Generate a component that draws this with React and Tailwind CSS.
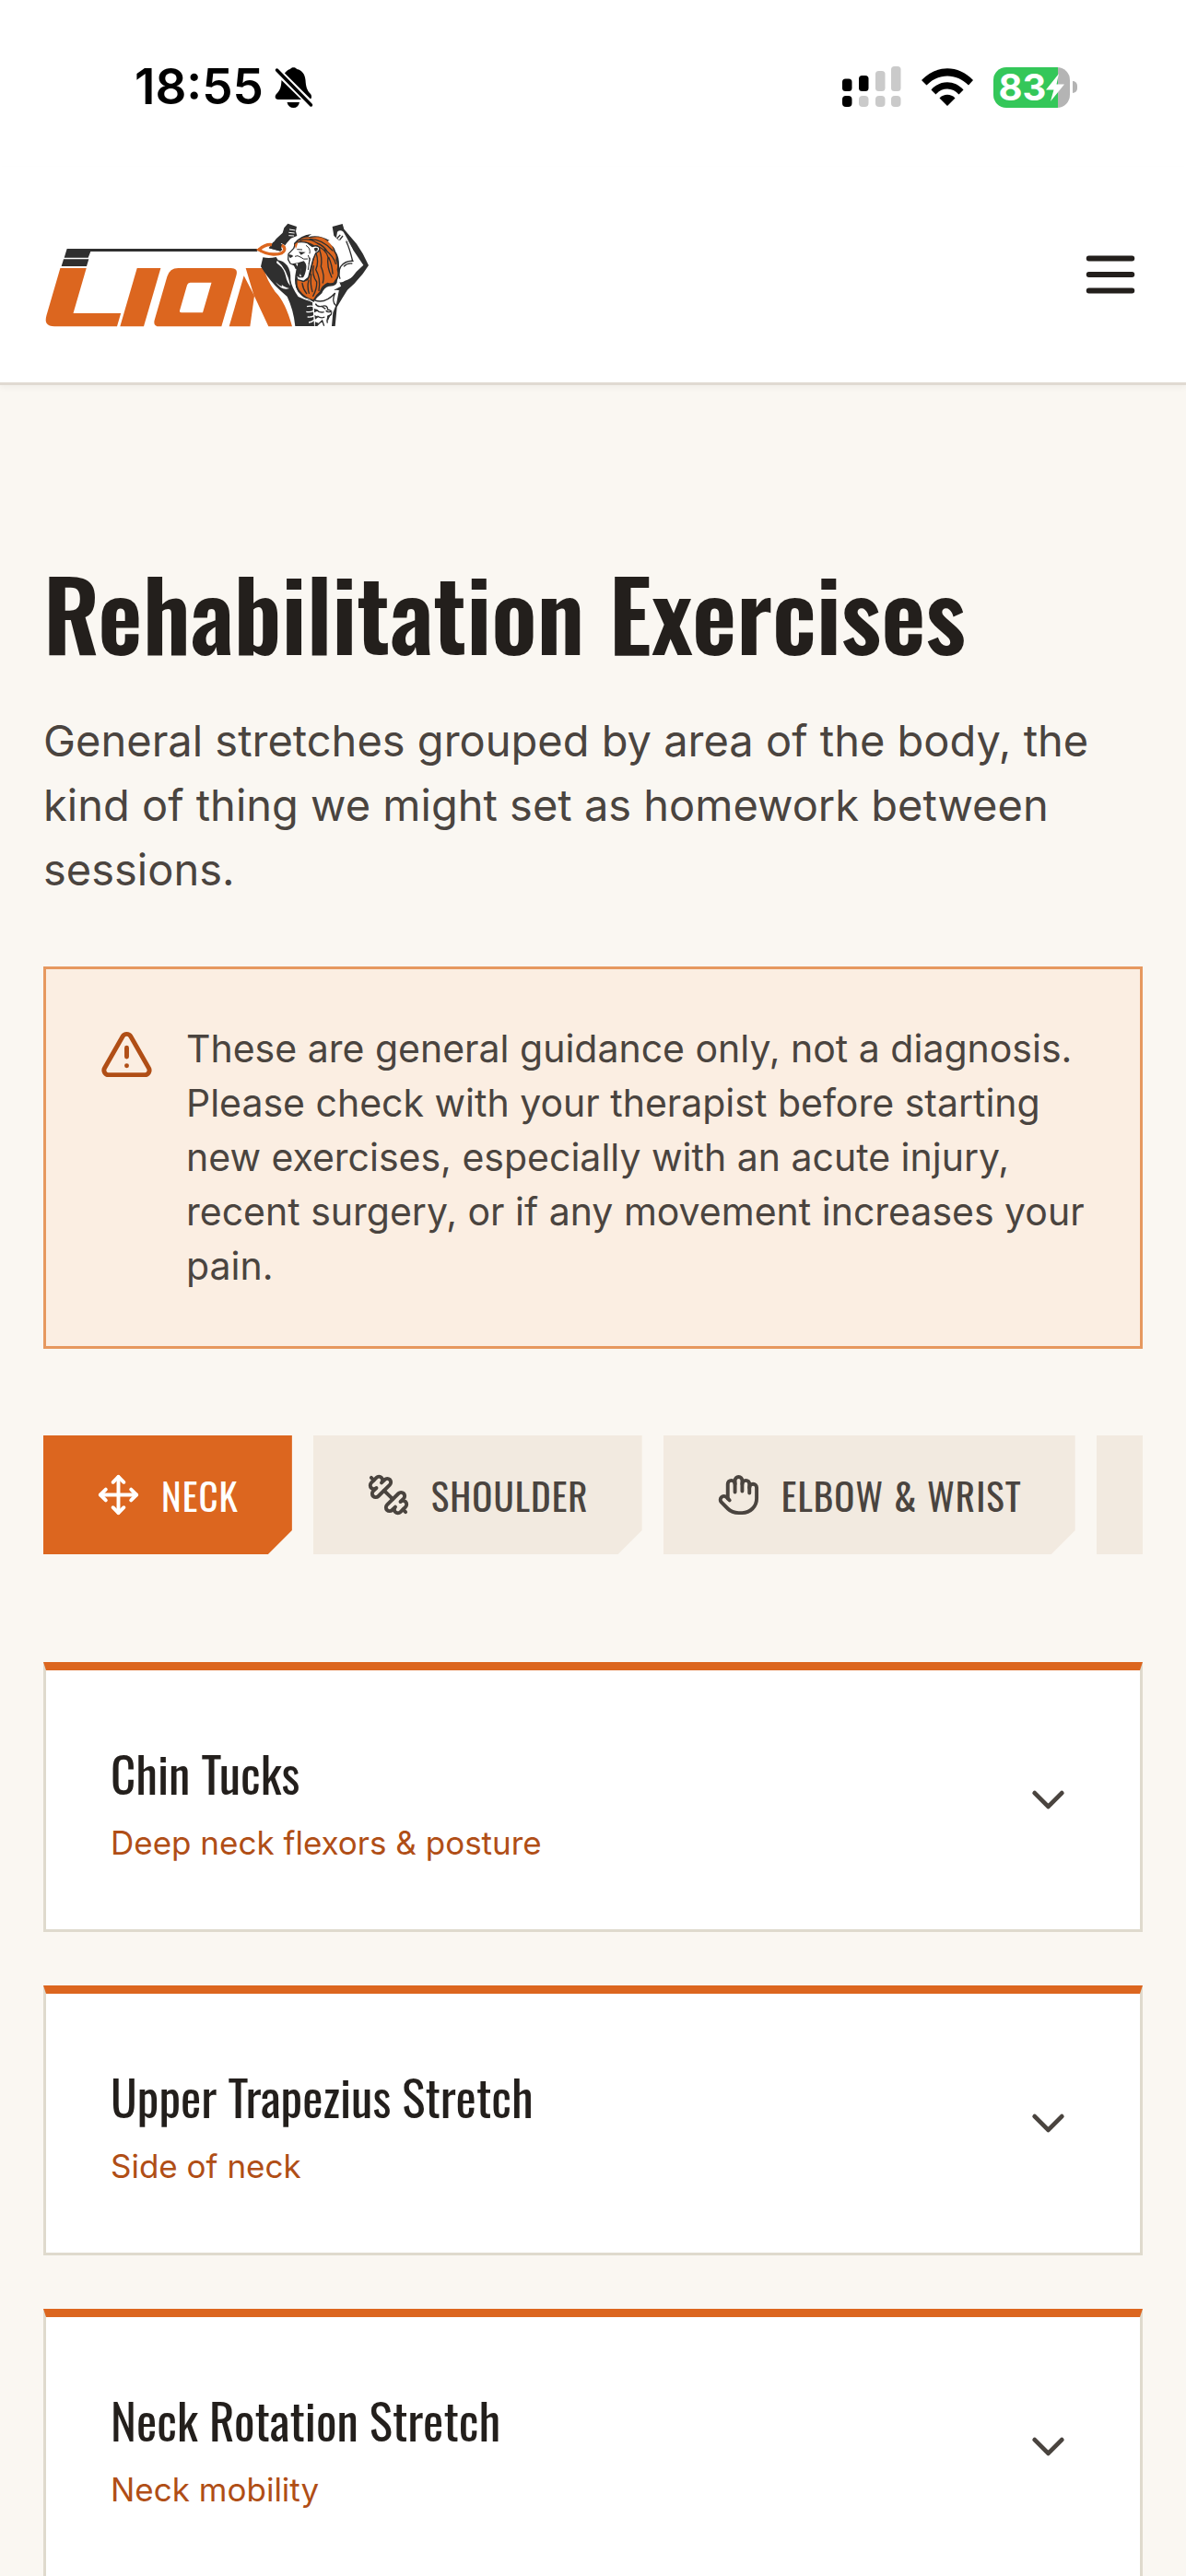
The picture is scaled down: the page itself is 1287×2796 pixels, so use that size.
import { TriangleAlert, Move, Hand, Footprints, ChevronDown } from "lucide-react";

function DumbbellDown({ className }) {
  return (
    <svg
      viewBox="0 0 24 24"
      className={className}
      fill="none"
      stroke="currentColor"
      strokeWidth="2"
      strokeLinecap="round"
      strokeLinejoin="round"
      aria-hidden="true"
    >
      <path d="M14.400 14.400 9.600 9.600" />
      <path d="M18.657 21.485a2 2 0 1 1-2.829-2.828l-1.767 1.768a2 2 0 1 1-2.829-2.829l6.364-6.364a2 2 0 1 1 2.829 2.829l-1.768 1.767a2 2 0 1 1 2.828 2.829z" />
      <path d="m21.500 21.500-1.400-1.400" />
      <path d="M3.900 3.900 2.500 2.500" />
      <path d="M6.404 12.768a2 2 0 1 1-2.829-2.829l1.768-1.767a2 2 0 1 1-2.828-2.829l2.828-2.828a2 2 0 1 1 2.829 2.828l1.767-1.768a2 2 0 1 1 2.829 2.829z" />
    </svg>
  );
}

const TABS = [
  { label: "Neck", icon: Move, active: true },
  { label: "Shoulder", icon: DumbbellDown },
  { label: "Elbow & Wrist", icon: Hand },
  { label: "Back", icon: Footprints },
];

const EXERCISES = [
  { title: "Chin Tucks", area: "Deep neck flexors & posture" },
  { title: "Upper Trapezius Stretch", area: "Side of neck" },
  { title: "Neck Rotation Stretch", area: "Neck mobility" },
];

function BellOff() {
  return (
    <svg viewBox="0 0 42 46" className="h-[46px] w-[42px]" aria-label="Silent mode">
      <path d="M10 9C12 5 15 3.500 17 3C18 .5 23 .5 24 3C30 4 33 9 33.500 15C34 22 35 26 39 30C41 33 40 36 37 36L36 36Z" />
      <path d="M7.500 15L29 36H4C0 36 0 32 2 30C6 26 7 23 7.500 15Z" />
      <path d="M13.500 39H27C26 43 24 45 20.500 45C17 45 14.500 43 13.500 39Z" />
      <path d="M2.500 4L40 41.500" stroke="#fff" strokeWidth="7" />
      <path d="M2.500 4L39.500 42" stroke="#000" strokeWidth="3.500" strokeLinecap="round" />
    </svg>
  );
}

function Signal() {
  return (
    <svg viewBox="0 0 64 46" className="h-[46px] w-16" aria-label="Signal">
      <g fill="#cacaca">
        <rect x="36" y="5" width="10.500" height="22" rx="3.500" />
        <rect x="53" y="0" width="10.500" height="27" rx="3.500" />
        <rect x="18" y="32" width="10.500" height="12" rx="4" />
        <rect x="36" y="32" width="10.500" height="12" rx="4" />
        <rect x="53" y="32" width="10.500" height="12" rx="4" />
      </g>
      <rect x="0" y="13.500" width="10.500" height="13.500" rx="3.500" />
      <rect x="18" y="10" width="10.500" height="17" rx="3.500" />
      <rect x="0" y="32" width="10.500" height="12" rx="4" />
    </svg>
  );
}

function Wifi() {
  return (
    <svg viewBox="0 0 56 42" className="h-[42px] w-14" aria-label="Wi-Fi">
      <path d="M28 41L19.500 32.500C24 27.500 32 27.500 36.500 32.500Z" />
      <path d="M10.500 23.500C20 12.500 36 12.500 45.500 23.500L40.500 28.500C34 20.500 22 20.500 15.500 28.500Z" />
      <path d="M0 13C16 -4 40 -4 56 13L51 18.500C38 5 18 5 5.500 18.500Z" />
    </svg>
  );
}

function Battery() {
  return (
    <div className="flex items-center gap-[3px]" aria-label="Battery 83 percent, charging">
      <div className="flex h-11 w-[83px] items-center justify-center rounded-[14px] bg-[linear-gradient(90deg,#34c759_84%,#b4b4b4_84%)]">
        <span className="text-[40px] leading-none font-bold text-white">83</span>
        <svg viewBox="0 0 20 30" className="h-[30px] w-5" fill="#fff">
          <path d="M14 0L0 17.500H8.500L5 30L20 11.500H11.500Z" />
        </svg>
      </div>
      <div className="h-[13px] w-[5px] rounded-r-full bg-[#b4b4b4]" />
    </div>
  );
}

function Logo() {
  return (
    <svg viewBox="50 60 1065 348" className="h-[116px] w-[355px]" role="img" aria-label="Lion">
      <g fill="#dc661f">
        {/* slanted bars of the word mark */}
        <g transform="translate(0 403) skewX(-16.200)">
          <path d="M50 -190H135V-43H290V0H86Q50 0 50 -36Z" />
          <rect x="300" y="-190" width="77" height="190" />
          <path fillRule="evenodd" d="M434 -190H606Q630 -190 630 -166V0H428Q406 0 406 -22V-162Q406 -190 434 -190ZM487 -143Q479 -143 479 -135V-53Q479 -45 487 -45H556V-143Z" />
        </g>
        <path d="M655 403L703 238L737 303L723 403Z" />
        <path d="M709 213H768Q776 250 805 290Q838 322 860 403H783L735 300Z" />
      </g>
      <g fill="#2f2f2f">
        <path d="M127 150H747V159H204L196 179H118Z" />
        <path d="M116 184H198L191 207H109Z" />
      </g>

      <g transform="translate(738 48)">
        {/* torso and right arm in white, under the dark shading */}
        <path d="M120 185L262 45L300 70L330 110L366 155L320 215L280 260L258 354H190L140 262Z" fill="#fff" />

        {/* left fist and forearm */}
        <path d="M108 20L137 30L134 45L138 60L118 68L104 84L86 110L47 100L70 70L91 50L96 34Z" fill="#2f2f2f" />
        <path d="M113 39L132 42M111 49L130 51M111 59L128 60" stroke="#fff" strokeWidth="3" fill="none" />

        {/* ring */}
        <path d="M14 105Q36 86 60 88M84 91Q99 96 97 106Q93 122 60 121Q34 120 14 105" fill="none" stroke="#fff" strokeWidth="15" />
        <path d="M46 100L84 110L90 88L60 80Z" fill="#2f2f2f" />
        <path d="M14 105Q36 86 56 89M88 91Q99 96 97 106Q93 121 60 120Q34 119 14 105" fill="none" stroke="#dc661f" strokeWidth="10" strokeLinejoin="round" />
        <path d="M4 105L22 96V114Z" fill="#dc661f" />

        {/* left upper arm, chest and abdomen in shadow */}
        <path d="M27 130Q48 134 70 129L76 139Q93 141 106 157Q118 173 117 204Q120 227 142 258Q162 268 188 276L194 354H132Q127 302 106 258Q83 238 67 222Q42 196 20 160Z" fill="#2f2f2f" />
        <path d="M74 141Q66 147 80 155Q95 166 101 190Q105 211 116 223Q106 168 74 141Z" fill="#fff" />
        <path d="M68 211Q89 240 113 231Q96 227 88 218Q95 234 68 211Z" fill="#fff" />
        <path d="M170 290Q185 286 196 292M168 307Q181 310 192 304M172 324Q184 326 194 320M176 342Q186 342 194 334" stroke="#fff" strokeWidth="4" fill="none" />

        {/* right arm */}
        <path d="M253 30L286 21L291 38L300 49L332 86L352 118L371 156L352 184L324 216L302 236L286 262L268 292L262 354H251L255 310L266 282L274 240L258 236Q305 216 331 177L354 155L322 108L301 76L292 68L276 76L258 60Z" fill="#2f2f2f" />
        <path d="M269 47Q279 39 289 47L301 68L319 103L320 146Q298 138 282 158Q270 178 281 202Q308 207 336 166L350 156L324 120L303 78L296 71L282 78L266 66Z" fill="#fff" />
        <path d="M268 68L279 57M277 73L287 60M298 77Q310 103 319 142M322 142Q297 139 280 160Q270 180 278 200M290 160Q302 147 318 150" stroke="#2f2f2f" strokeWidth="4" fill="none" />
        <path d="M294 206Q286 213 276 211L286 236Q314 210 331 183Q314 200 294 206Z" fill="#2f2f2f" />

        {/* chest and abdominal lines */}
        <path d="M202 267Q225 263 242 246Q260 232 276 238Q261 251 244 259Q224 272 202 267Z" fill="#fff" />
        <path d="M196 270Q230 282 262 246M262 246Q248 274 266 288M198 281Q204 293 220 289Q237 284 238 300Q253 303 249 316Q232 326 237 344M200 300Q211 312 226 308M204 321Q216 330 228 324M216 288L231 298M210 345L220 336L226 353M252 305Q239 312 232 303" fill="none" stroke="#2f2f2f" strokeWidth="4" />
        <path d="M194 296L208 303L194 310ZM195 318L208 324L197 332ZM197 340L212 346L204 354H196ZM236 320L248 315L238 338Z" fill="#2f2f2f" />

        {/* mane */}
        <path d="M128 84Q148 58 186 54Q176 59 174 64Q208 54 244 75Q238 76 236 80Q261 95 263 110Q276 128 275 158Q282 178 269 204Q270 225 242 224Q225 229 219 247Q204 258 192 276Q164 270 140 241Q128 222 132 190L140 142L128 105Z" fill="#2f2f2f" />
        <path d="M140 78Q161 61 183 66Q220 57 239 79Q255 91 258 112Q268 126 264 139Q272 156 268 170Q275 190 260 206Q258 217 237 212Q219 220 211 242Q200 250 191 268Q164 261 146 237Q136 222 139 200L158 211L174 204L184 180L191 143L200 112L193 90Q172 76 140 78Z" fill="#dc661f" />
        <path d="M148 75Q178 65 204 84Q224 91 237 112M180 70Q221 71 254 108M203 93Q233 105 239 130Q234 159 251 195M211 106Q221 133 216 160Q229 190 222 213M200 116Q210 145 199 170Q216 199 209 238M192 158Q185 186 202 210Q203 233 190 256M184 185Q180 217 188 242M176 205Q170 225 177 247M155 214Q157 232 169 248M241 130Q252 154 254 183M228 104Q257 126 264 151" fill="none" stroke="#2f2f2f" strokeWidth="4" strokeLinecap="round" />
        <path d="M129 213Q134 247 160 263Q178 265 191 277" fill="none" stroke="#fff" strokeWidth="3" />

        {/* face */}
        <path d="M133 84Q149 76 172 83L188 95Q202 88 211 98Q214 110 199 116L191 134L184 160L175 196L160 208L140 203L136 192L150 180L148 164L134 166L130 156L116 150L109 137L110 119L127 101Z" fill="#fff" stroke="#2f2f2f" strokeWidth="4" strokeLinejoin="round" />
        <path d="M130 88L142 79L134 103Z" fill="#dc661f" />
        <path d="M109 122Q119 119 126 126L116 133ZM143 112L166 113L151 122ZM193 101Q201 95 206 101Q206 109 197 111ZM122 151L140 148L160 142Q170 151 168 166Q165 186 158 196L144 196L139 191L151 181L149 165L136 166Z" fill="#2f2f2f" />
        <path d="M131 127Q140 122 149 129Q159 139 173 135M167 91Q183 100 179 118M174 123Q184 139 176 151M180 131L174 171M138 104L155 105" fill="none" stroke="#2f2f2f" strokeWidth="3" />
        <path d="M134 151L141 149L139 160ZM146 192L148 184L153 191Z" fill="#fff" />
      </g>
    </svg>
  );
}

function ExerciseCard({ title, area }) {
  return (
    <button
      type="button"
      className="flex w-full items-center justify-between border-3 border-t-9 border-[#dfdacd] border-t-[#dc661f] bg-white p-[70px] text-left"
    >
      <span className="flex flex-col gap-3">
        <span className="font-[Oswald,sans-serif] text-[53px] leading-[82px] text-[#231f1c]">{title}</span>
        <span className="text-[35px] leading-[47px] text-[#b04e16]">{area}</span>
      </span>
      <ChevronDown className="size-[59px] shrink-0 text-[#4a443f]" />
    </button>
  );
}

export default function App() {
  return (
    <div className="h-screen overflow-hidden bg-[#faf7f2] font-[Inter,sans-serif] text-[#4a443f]">
      <div className="flex h-[181px] items-center justify-between bg-white pr-[118px] pl-[146px] text-black">
        <div className="flex items-center gap-3 pt-2">
          <span className="text-[53px] leading-none font-semibold">18:55</span>
          <BellOff />
        </div>
        <div className="flex items-center gap-[22px] pt-2">
          <Signal />
          <Wifi />
          <Battery />
        </div>
      </div>

      <header className="flex h-[237px] items-center justify-between border-b-3 border-[#e0dad2] bg-white px-[47px] shadow-[0_3px_6px_rgba(0,0,0,0.04)]">
        <a href="#home" aria-label="Home">
          <Logo />
        </a>
        <button type="button" aria-label="Open menu" className="text-[#231f1c]">
          <svg viewBox="0 0 24 24" className="size-[70px]" stroke="currentColor" strokeWidth="2" strokeLinecap="round">
            <path d="M4 6H20M4 12H20M4 18H20" />
          </svg>
        </button>
      </header>

      <main className="px-[47px] pt-[187px]">
        <h1 className="font-[Oswald,sans-serif] text-[105px] leading-[117px] font-semibold text-[#231f1c]">
          Rehabilitation Exercises
        </h1>
        <p className="mt-[47px] text-[47px] leading-[70px]">
          General stretches grouped by area of the body, the kind of thing we might set as homework between sessions.
        </p>

        <div className="mt-[70px] flex gap-[35px] border-3 border-[#e6985f] bg-[#fbeee2] px-[58px] py-[57px]" role="note">
          <TriangleAlert className="mt-1.5 size-[59px] shrink-0 text-[#b04e16]" />
          <p className="text-[41px] leading-[59px]">
            These are general guidance only, not a diagnosis. Please check with your therapist before starting new
            exercises, especially with an acute injury, recent surgery, or if any movement increases your pain.
          </p>
        </div>

        <nav className="mt-[94px] flex gap-[23px] overflow-hidden" aria-label="Body areas">
          {TABS.map(({ label, icon: Icon, active }) => (
            <button
              key={label}
              type="button"
              className={
                "flex h-[129px] shrink-0 items-center gap-[23px] px-[58px] font-[Oswald,sans-serif] text-[41px] tracking-wide uppercase [clip-path:polygon(0_0,100%_0,100%_calc(100%-26px),calc(100%-26px)_100%,0_100%)] " +
                (active ? "bg-[#dc661f] text-white" : "bg-[#f2eae0] text-[#4a443f]")
              }
            >
              <Icon className="size-[47px] shrink-0" />
              {label}
            </button>
          ))}
        </nav>

        <div className="mt-[117px] flex flex-col gap-[58px]">
          {EXERCISES.map((exercise) => (
            <ExerciseCard key={exercise.title} {...exercise} />
          ))}
        </div>
      </main>
    </div>
  );
}
